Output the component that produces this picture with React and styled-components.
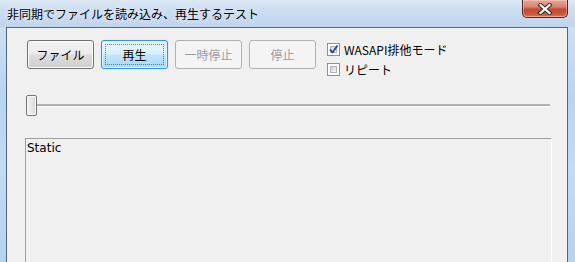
import React from "react";
import styled, { createGlobalStyle } from "styled-components";

const Global = createGlobalStyle`
  html, body { margin: 0; padding: 0; background: #f0f0f0; }
  body { width: 575px; height: 262px; overflow: hidden; }
`;

const JP = `"Noto Sans CJK JP", "Noto Sans", sans-serif`;

const Window = styled.div`
  width: 575px;
  height: 262px;
  display: flex;
  flex-direction: column;
  background: linear-gradient(90deg, #cfe0f3 0%, #c4daf1 55%, #b4d0ee 80%, #c8dcf2 100%);
  overflow: hidden;
`;

const TitleBar = styled.div`
  height: 27px;
  flex: none;
  display: flex;
  align-items: flex-start;
  background: linear-gradient(180deg, #dce8f6 0%, #cbdcf0 40%, #bfd5ee 100%);
`;

const Title = styled.div`
  font-family: ${JP};
  font-size: 12px;
  line-height: 27px;
  color: #000;
  padding-left: 7px;
  white-space: nowrap;
  text-shadow: 0 0 6px rgba(255,255,255,0.9);
`;

const CloseBtn = styled.div`
  margin-left: auto;
  margin-right: 7px;
  width: 46px;
  height: 18px;
  box-sizing: border-box;
  border: 1px solid #5a2218;
  border-top: none;
  border-radius: 0 0 5px 5px;
  background: linear-gradient(180deg, #e7a898 0%, #d88470 40%, #c24a2f 55%, #cb5a3e 85%, #d9826a 100%);
  box-shadow: inset 0 0 0 1px rgba(255,220,210,0.45);
  display: flex;
  align-items: center;
  justify-content: center;
`;

const Body = styled.div`
  flex: 1;
  display: flex;
  min-height: 0;
`;

const SideFrame = styled.div`
  width: ${p => p.$w}px;
  flex: none;
  background: linear-gradient(180deg, #cddff3 0%, #b7d4f3 30%, #c3dbf4 60%, #b5d2f2 100%);
`;

const Client = styled.div`
  flex: 1;
  background: #f0f0f0;
  border: 1px solid #56667a;
  border-bottom: none;
  display: flex;
  flex-direction: column;
  padding-top: 12px;
  min-width: 0;
`;

const TopRow = styled.div`
  display: flex;
  align-items: flex-start;
  margin-left: 20px;
`;

const ButtonGroup = styled.div`
  display: flex;
  gap: 7px;
`;

const Btn = styled.div`
  width: 67px;
  height: 29px;
  box-sizing: border-box;
  border-radius: 3px;
  font-family: ${JP};
  font-size: 12px;
  display: flex;
  align-items: center;
  justify-content: center;
  position: relative;
  ${p => p.$variant === "normal" && `
    border: 1px solid #707070;
    color: #000;
    background: linear-gradient(180deg, #f2f2f2 0%, #ebebeb 48%, #dddddd 52%, #cfcfcf 100%);
    box-shadow: inset 0 0 0 1px #fbfbfb;
  `}
  ${p => p.$variant === "default" && `
    border: 1px solid #3395d6;
    color: #000;
    background: linear-gradient(180deg, #eaf6fd 0%, #d9f0fc 48%, #bee6fd 52%, #a7d9f5 100%);
    box-shadow: inset 0 0 0 1px #dff2fd, 0 0 1px #6fc0f0;
  `}
  ${p => p.$variant === "disabled" && `
    border: 1px solid #adb2b5;
    color: #9d9d9d;
    background: #f4f4f4;
  `}
`;

const FocusRect = styled.span`
  position: absolute;
  inset: 3px;
  border: 1px dotted #a06060;
  pointer-events: none;
`;

const CheckCol = styled.div`
  margin-left: 11px;
  margin-top: 2px;
  display: flex;
  flex-direction: column;
  gap: 6px;
`;

const CheckRow = styled.div`
  display: flex;
  align-items: center;
  height: 14px;
  gap: 4px;
  font-family: ${JP};
  font-size: 12px;
  color: #000;
  white-space: nowrap;
`;

const Box = styled.div`
  width: 13px;
  height: 13px;
  box-sizing: border-box;
  border: 1px solid #8e8f8f;
  background: #fff;
  padding: 2px;
  flex: none;
  display: flex;
`;

const BoxInner = styled.div`
  flex: 1;
  background: linear-gradient(135deg, #cbcfd5 0%, #e6e8ea 60%, #f4f4f4 100%);
  border: 1px solid #aeb3b9;
  position: relative;
`;

const Tick = styled.svg`
  position: absolute;
  left: -3px;
  top: -3px;
`;

const SliderArea = styled.div`
  margin-top: 19px;
  margin-left: 19px;
  width: 525px;
  height: 21px;
  position: relative;
`;

const Track = styled.div`
  position: absolute;
  left: 1px;
  right: 1px;
  top: 9px;
  height: 1px;
  background: #a9a9a9;
  border-top: 1px solid #b5b5b5;
  border-bottom: 1px solid #ffffff;
`;

const Thumb = styled.div`
  position: absolute;
  left: 0;
  top: 0;
  width: 11px;
  height: 21px;
  box-sizing: border-box;
  border: 1px solid #737373;
  border-radius: 2px;
  background: linear-gradient(90deg, #f3f3f3 0%, #e7e7e7 50%, #d8d8d8 100%);
  box-shadow: inset 0 0 0 1px #fcfcfc;
`;

const StaticBox = styled.div`
  margin-top: 22px;
  margin-left: 18px;
  width: 527px;
  flex: 1;
  box-sizing: border-box;
  border-top: 1px solid #a0a0a0;
  border-left: 1px solid #a0a0a0;
  border-right: 1px solid #ffffff;
  padding: 2px 1px;
  font-family: "DejaVu Sans", "Liberation Sans", sans-serif;
  font-size: 12px;
  line-height: 14px;
  color: #000;
`;

function Checkbox({ checked, label }) {
  return (
    <CheckRow>
      <Box>
        <BoxInner>
          {checked && (
            <Tick width="11" height="11" viewBox="0 0 11 11">
              <path d="M2 5.5 L4.5 8.5 L9.5 1.5" fill="none" stroke="#2a3f9a" strokeWidth="1.8" strokeLinejoin="round" />
            </Tick>
          )}
        </BoxInner>
      </Box>
      {label}
    </CheckRow>
  );
}

export default function App() {
  return (
    <>
      <Global />
      <Window>
        <TitleBar>
          <Title>非同期でファイルを読み込み、再生するテスト</Title>
          <CloseBtn>
            <svg width="16" height="12" viewBox="0 0 16 12">
              <path d="M3.5 2 L12.5 10 M12.5 2 L3.5 10" stroke="#3a2a2a" strokeWidth="4.2" strokeLinecap="square" />
              <path d="M3.5 2 L12.5 10 M12.5 2 L3.5 10" stroke="#ffffff" strokeWidth="2.2" strokeLinecap="square" />
            </svg>
          </CloseBtn>
        </TitleBar>
        <Body>
          <SideFrame $w={6} />
          <Client>
            <TopRow>
              <ButtonGroup>
                <Btn $variant="normal">ファイル</Btn>
                <Btn $variant="default">
                  <FocusRect />
                  再生
                </Btn>
                <Btn $variant="disabled">一時停止</Btn>
                <Btn $variant="disabled">停止</Btn>
              </ButtonGroup>
              <CheckCol>
                <Checkbox checked label="WASAPI排他モード" />
                <Checkbox label="リピート" />
              </CheckCol>
            </TopRow>
            <SliderArea>
              <Track />
              <Thumb />
            </SliderArea>
            <StaticBox>Static</StaticBox>
          </Client>
          <SideFrame $w={7} />
        </Body>
      </Window>
    </>
  );
}
